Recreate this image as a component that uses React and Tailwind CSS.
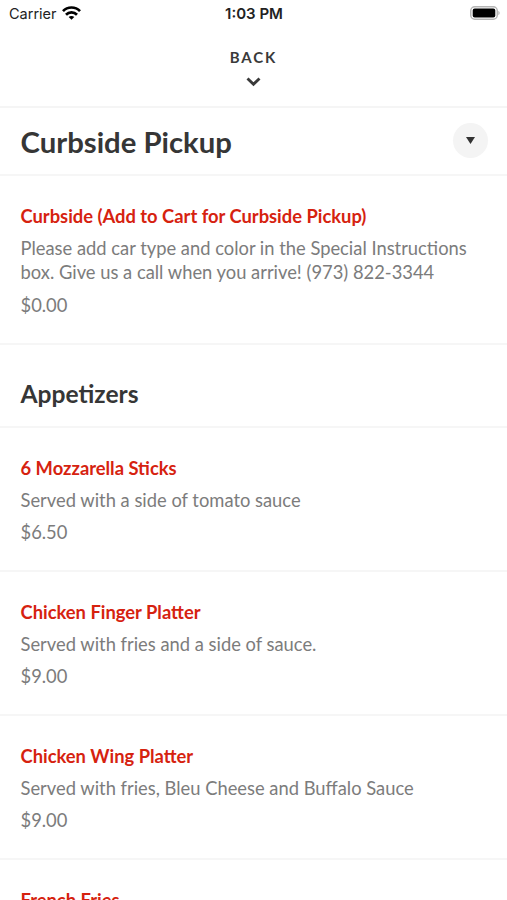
const sections = [
  {
    title: 'Curbside Pickup',
    items: [
      {
        name: 'Curbside (Add to Cart for Curbside Pickup)',
        description: 'Please add car type and color in the Special Instructions box. Give us a call when you arrive! (973) 822-3344',
        price: '$0.00',
      },
    ],
  },
  {
    title: 'Appetizers',
    items: [
      { name: '6 Mozzarella Sticks', description: 'Served with a side of tomato sauce', price: '$6.50' },
      { name: 'Chicken Finger Platter', description: 'Served with fries and a side of sauce.', price: '$9.00' },
      { name: 'Chicken Wing Platter', description: 'Served with fries, Bleu Cheese and Buffalo Sauce', price: '$9.00' },
      { name: 'French Fries' },
    ],
  },
];

function StatusBar() {
  return (
    <div className="grid h-7 grid-cols-3 items-center pl-[9px] pr-[7px] font-['Inter',sans-serif] text-[14.5px] text-[#222]">
      <div className="flex items-center gap-[5px]">
        <span>Carrier</span>
        <svg className="-mt-[2px]" width="19" height="14" viewBox="0 0 19 14" fill="none" stroke="#000" strokeWidth="2.7">
          <path d="M1 5.1C5.600.3 13.400.3 18 5.100" />
          <path d="M4 8.700C7 5.600 12 5.600 15 8.700" />
          <path d="M9.500 13.800 6.700 11C8.100 9.700 10.900 9.700 12.300 11Z" fill="#000" stroke="none" />
        </svg>
      </div>
      <div className="-ml-px text-center text-[15px] font-semibold">1:03 PM</div>
      <div className="-mt-[2px] flex justify-end">
        <svg width="30" height="14" viewBox="0 0 30 14">
          <rect x=".75" y=".75" width="26.500" height="12.500" rx="4" fill="none" stroke="#b5b5b5" strokeWidth="1.500" />
          <rect x="2.700" y="2.500" width="22.600" height="9" rx="2" fill="#000" />
          <path d="M28.300 4.800c1.800.8 1.800 3.600 0 4.400Z" fill="#b5b5b5" />
        </svg>
      </div>
    </div>
  );
}

function MenuItem({ name, description, price }) {
  return (
    <div className="border-b-2 border-[#f6f6f6] px-[20.5px] pb-[25.7px] pt-[27px]">
      <h3 className="text-[18.35px] font-bold leading-[26px] text-[#d6220f]">{name}</h3>
      {description && (
        <p className="mt-[7px] text-[18.35px] leading-[24.4px] text-[#7c7c7c]">{description}</p>
      )}
      {price && <p className="mt-2 text-[18.35px] leading-[24px] text-[#7c7c7c]">{price}</p>}
    </div>
  );
}

export default function App() {
  const [pickup, appetizers] = sections;

  return (
    <div className="h-[900px] w-[507px] overflow-hidden bg-white font-['Lato',sans-serif]">
      <StatusBar />
      <button className="flex h-[80px] w-full flex-col items-center border-b-2 border-[#f5f5f5] pt-[19px] text-[#3a3a3a]">
        <span className="text-[15px] font-bold leading-5 tracking-[1.9px]">BACK</span>
        <svg className="mt-[10px] -ml-px" width="15" height="10" viewBox="0 0 15 10" fill="none" stroke="currentColor" strokeWidth="2.900">
          <path d="M1.500 1.500 7.500 7.200 13.500 1.500" />
        </svg>
      </button>

      <div className="flex h-[68px] items-center justify-between border-b-2 border-[#f6f6f6] pl-[20.5px] pr-[19px]">
        <h1 className="pt-px text-[29.3px] font-bold text-[#363636]">{pickup.title}</h1>
        <button className="-mt-px flex size-[35px] items-center justify-center rounded-full bg-[#f4f4f4]">
          <svg width="9" height="7" viewBox="0 0 9 7" fill="#333">
            <path d="M0 0H9L4.500 7Z" />
          </svg>
        </button>
      </div>
      {pickup.items.map((item) => (
        <MenuItem key={item.name} {...item} />
      ))}

      <div className="flex h-[83px] items-end border-b-2 border-[#f6f6f6] px-[20.5px] pb-[13px]">
        <h2 className="text-[24.6px] font-bold text-[#363636]">{appetizers.title}</h2>
      </div>
      {appetizers.items.map((item) => (
        <MenuItem key={item.name} {...item} />
      ))}
    </div>
  );
}
